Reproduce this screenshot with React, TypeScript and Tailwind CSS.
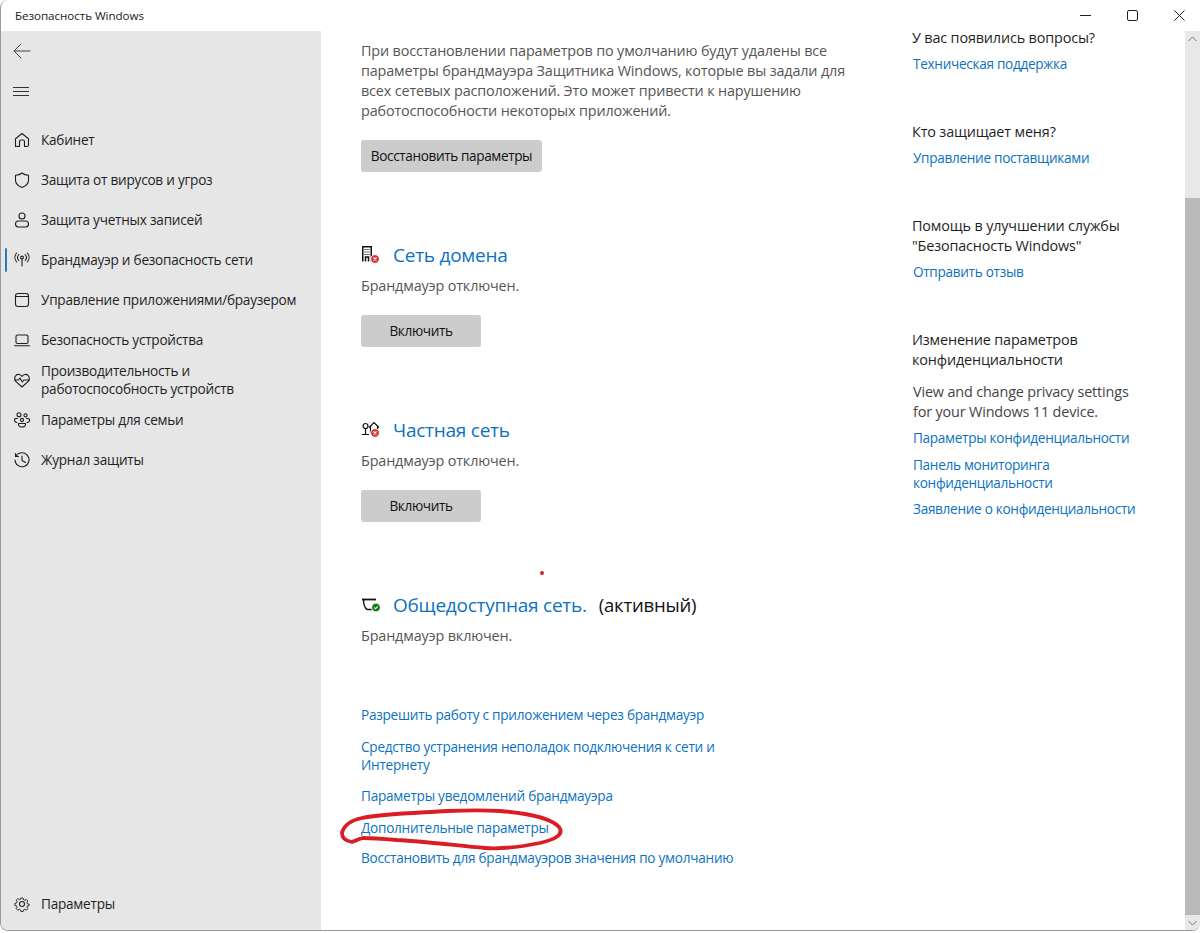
import React from "react";

const S = { fill: "none", stroke: "#1f1f1f", strokeWidth: 1.1, strokeLinecap: "round" as const, strokeLinejoin: "round" as const };
const Ico = ({ children }: { children: React.ReactNode }) => (
  <svg width="16" height="16" viewBox="0 0 16 16" {...S} className="shrink-0">{children}</svg>
);

const nav: { label: React.ReactNode; icon: React.ReactNode; active?: boolean }[] = [
  { label: "Кабинет", icon: <Ico><path d="M1.500 14.500V6.800L8 1.500l6.500 5.300v6.200a1.500 1.500 0 0 1-1.500 1.500h-2.500V9.500A1.500 1.500 0 0 0 9 8H7a1.500 1.500 0 0 0-1.500 1.500v5H3a1.500 1.500 0 0 1-1.500-1.500z" /></Ico> },
  { label: "Защита от вирусов и угроз", icon: <Ico><path d="M8 1C6 2.800 4 3.300 1.500 3.300v5C1.500 11.800 4 14 8 15.500c4-1.500 6.500-3.700 6.500-7.200v-5C12 3.300 10 2.800 8 1z" /></Ico> },
  { label: "Защита учетных записей", icon: <Ico><circle cx="8" cy="4" r="3" /><rect x="1.500" y="9" width="13" height="6" rx="3" /></Ico> },
  { label: "Брандмауэр и безопасность сети", active: true, icon: <Ico><circle cx="8" cy="5.500" r="1.400" /><path d="M8 7v7M4.800 2.500c-1.500 1.700-1.500 4.300 0 6M11.200 2.500c1.500 1.700 1.500 4.300 0 6M2.700 1c-2.300 2.600-2.300 6.400 0 9M13.300 1c2.300 2.600 2.300 6.400 0 9" /></Ico> },
  { label: "Управление приложениями/браузером", icon: <Ico><rect x="1.500" y="1.500" width="13" height="13" rx="2.500" /><path d="M1.500 4.500h13" /></Ico> },
  { label: "Безопасность устройства", icon: <Ico><rect x="2" y="3" width="12" height="8.500" rx="1.500" /><path d="M.5 13.800h15" /></Ico> },
  { label: <>Производительность и<br />работоспособность устройств</>, icon: <Ico><path d="M2.300 9.800C.2 7.800.2 4.800 2 3.300c1.900-1.500 4.500-1 6 1 1.500-2 4.100-2.500 6-1 1.800 1.500 1.800 4.500-.3 6.500L8 15z" /><path d="M.6 8h3.900l1.500-2 2.300 4 1.500-2h5.600" /></Ico> },
  { label: "Параметры для семьи", icon: <Ico><circle cx="5" cy="2.800" r="2" /><circle cx="11.500" cy="3.300" r="1.600" /><circle cx="8" cy="8" r="1.600" /><path d="M3.500 6.500H2A1.500 1.500 0 0 0 .5 8c0 1.600 1 2.500 2.500 2.500M12.500 6.500H14A1.500 1.500 0 0 1 15.500 8c0 1.600-1 2.500-2.500 2.500" /><path d="M4.500 11.500h7v.7c0 1.800-1.500 2.800-3.500 2.800s-3.500-1-3.500-2.800z" /></Ico> },
  { label: "Журнал защиты", icon: <Ico><path d="M1.800 4.500A7 7 0 1 1 1 8M1.500 1.500v3h3M8 4v4.500l3.500 2" /></Ico> },
];

const L = ({ children, className = "" }: { children: React.ReactNode; className?: string }) => (
  <a className={`block text-[#0b72c0] ${className}`}>{children}</a>
);

const Btn = ({ children, w }: { children: React.ReactNode; w: string }) => (
  <div className={`h-8 ${w} rounded-[3px] bg-[#cccccc] text-[#111] text-[13.600px] tracking-[-0.38px] flex items-center justify-center`}>{children}</div>
);

const Net = ({ icon, title, status, extra }: { icon: React.ReactNode; title: string; status: string; extra?: string }) => (
  <div>
    <div className="flex items-center h-7">
      <div className="w-8 shrink-0">{icon}</div>
      <span className="text-[#0b72c0] text-[19px] tracking-[-0.25px]">{title}</span>
      {extra && <span className="ml-[12px] text-[#111] text-[18.500px] tracking-[-0.2px]">{extra}</span>}
    </div>
    <div className="mt-[7px] text-[#555] text-[14.400px]">{status}</div>
  </div>
);

const Bad = ({ cx, cy }: { cx: number; cy: number }) => (
  <g transform={`translate(${cx} ${cy})`}>
    <circle r="4.400" fill="#d13438" stroke="#fff" strokeWidth="1" />
    <path d="M-1.500-1.500l3 3M1.500-1.500l-3 3" stroke="#fff" strokeWidth="1.100" />
  </g>
);

export default function App() {
  return (
    <div className="relative w-[1200px] h-[933px] bg-white overflow-hidden text-[13.600px] leading-5 font-['Open_Sans','Liberation_Sans',sans-serif] tracking-[-0.15px]">
      <div className="h-[931px] rounded-lg border-l border-b border-[#9a9a9a] flex flex-col overflow-hidden bg-white">
        <div className="h-[31px] shrink-0 flex items-center justify-between">
          <span className="ml-[14px] text-[11.600px] text-[#1a1a1a] tracking-[-0.05px]">Безопасность Windows</span>
          <div className="flex items-center mr-[15px] gap-[36px] mt-[-1px]">
            <svg width="11" height="11" viewBox="0 0 11 11" fill="none" stroke="#222" strokeWidth="1"><path d="M0 5.500h11" /></svg>
            <svg width="11" height="11" viewBox="0 0 11 11" fill="none" stroke="#222" strokeWidth="1"><rect x=".5" y=".5" width="10" height="10" rx="1.500" /></svg>
            <svg width="11" height="11" viewBox="0 0 11 11" fill="none" stroke="#222" strokeWidth="1"><path d="M.5.500l10 10M10.500.500l-10 10" /></svg>
          </div>
        </div>
        <div className="flex flex-1 min-h-0">
          <aside className="w-[320px] shrink-0 bg-[#e6e6e6] flex flex-col text-[#1f1f1f] tracking-[-0.24px]">
            <div className="h-10 flex items-center pl-[12px]">
              <svg width="18" height="16" viewBox="0 0 18 16" fill="none" stroke="#444" strokeWidth="1" strokeLinecap="round" strokeLinejoin="round"><path d="M1 8h16M8 1L1 8l7 7" /></svg>
            </div>
            <div className="h-10 flex items-center pl-[12px] pt-[1px]">
              <svg width="16" height="10" viewBox="0 0 16 10" fill="none" stroke="#333" strokeWidth="1"><path d="M0 .5h16M0 4.500h16M0 8.500h16" /></svg>
            </div>
            <div className="mt-[9px] flex flex-col">
              {nav.map((n, i) => (
                <div key={i} className="relative h-10 flex items-center pl-[13px] gap-[11px]">
                  {n.active && <div className="absolute left-[4px] top-[8px] w-[2px] h-[24px] rounded-sm bg-[#2a7cb8]" />}
                  {n.icon}
                  <span className="leading-[18px] whitespace-nowrap">{n.label}</span>
                </div>
              ))}
            </div>
            <div className="mt-auto mb-[6px] h-10 flex items-center pl-[13px] gap-[11px]">
              <Ico><circle cx="8" cy="8" r="2.500" /><path d="M6.700 1h2.600l.4 2 1.600.7 1.800-1.100 1.800 1.800-1.100 1.800.7 1.600 2 .4v1.600l-2 .4-.7 1.600 1.100 1.800-1.800 1.800-1.800-1.100-1.600.7-.4 2H6.700l-.4-2-1.600-.7-1.800 1.100-1.800-1.800 1.100-1.800-.7-1.600-2-.4V7.200l2-.4.7-1.600-1.100-1.800 1.800-1.800 1.800 1.100 1.600-.7z" transform="translate(1.300 1.300) scale(.84)" /></Ico>
              <span>Параметры</span>
            </div>
          </aside>

          <main className="w-[591px] shrink-0 pl-[40px] pt-[10px] text-[#555]">
            <p className="whitespace-nowrap text-[14.400px]">При восстановлении параметров по умолчанию будут удалены все<br />параметры брандмауэра Защитника Windows, которые вы задали для<br />всех сетевых расположений. Это может привести к нарушению<br />работоспособности некоторых приложений.</p>
            <div className="mt-[19px]"><Btn w="w-[181px]">Восстановить параметры</Btn></div>
            <div className="mt-[69px]">
              <Net title="Сеть домена" status="Брандмауэр отключен." icon={
                <svg width="24" height="20" viewBox="0 0 24 20" fill="none" stroke="#111" strokeWidth="1.500"><path d="M1.750 16.500V1.750h8.500V16.500M4.500 16.500v-4.500h3v4.500" /><path d="M3.500 4.500h5M3.500 7h5M3.500 9.500h5" strokeWidth="1" strokeDasharray="1.200 .8" /><Bad cx={14} cy={14} /></svg>
              } />
            </div>
            <div className="mt-[19px]"><Btn w="w-[120px]">Включить</Btn></div>
            <div className="mt-[69px]">
              <Net title="Частная сеть" status="Брандмауэр отключен." icon={
                <svg width="24" height="20" viewBox="0 0 24 20" fill="none" stroke="#111" strokeWidth="1.200"><circle cx="4.500" cy="6" r="2.500" /><path d="M4.500 8.500V14M1 14.500h7M8 7.500l5-5 5 5M9.500 6.500V14M16.500 6.500V10" /><Bad cx={14} cy={13} /></svg>
              } />
            </div>
            <div className="mt-[19px]"><Btn w="w-[120px]">Включить</Btn></div>
            <div className="mt-[69px]">
              <Net title="Общедоступная сеть." extra="(активный)" status="Брандмауэр включен." icon={
                <svg width="24" height="20" viewBox="0 0 24 20" fill="none" stroke="#111" strokeWidth="1.400"><path d="M1 4.500h14" strokeWidth="1.800" /><path d="M2.500 5c0 2 .5 5 1.500 7 .5 1.500 1.500 2.500 3 2.500h4" /><circle cx="15" cy="12.500" r="4.400" fill="#107c10" stroke="#fff" strokeWidth="1" /><path d="M13.200 12.500l1.300 1.300 2.300-2.500" stroke="#fff" strokeWidth="1.100" /></svg>
              } />
            </div>
            <div className="mt-[60px] flex flex-col whitespace-nowrap leading-[18px] tracking-[-0.25px]">
              <L>Разрешить работу с приложением через брандмауэр</L>
              <L className="mt-[14px]">Средство устранения неполадок подключения к сети и<br />Интернету</L>
              <L className="mt-[13px]">Параметры уведомлений брандмауэра</L>
              <L className="mt-[14px]">Дополнительные параметры</L>
              <L className="mt-[12px]">Восстановить для брандмауэров значения по умолчанию</L>
            </div>
          </main>

          <section className="flex-1 min-w-0 text-[#1f1f1f] whitespace-nowrap mt-[-3px]">
            <div className="text-[14.400px]">У вас появились вопросы?</div>
            <L className="mt-[6px] pl-[1px] tracking-[-0.3px]">Техническая поддержка</L>
            <div className="mt-[48px] text-[14.400px]">Кто защищает меня?</div>
            <L className="mt-[6px] pl-[1px] tracking-[-0.3px]">Управление поставщиками</L>
            <div className="mt-[48px] text-[14.400px]">Помощь в улучшении службы<br />"Безопасность Windows"</div>
            <L className="mt-[6px] pl-[1px] tracking-[-0.3px]">Отправить отзыв</L>
            <div className="mt-[48px] text-[14.400px]">Изменение параметров<br />конфиденциальности</div>
            <div className="mt-[12px] pl-[1px] text-[#444] text-[14.400px]">View and change privacy settings<br />for your Windows 11 device.</div>
            <L className="mt-[6px] pl-[1px] tracking-[-0.3px]">Параметры конфиденциальности</L>
            <L className="mt-[8px] pl-[1px] leading-[18px] tracking-[-0.3px]">Панель мониторинга<br />конфиденциальности</L>
            <L className="mt-[7px] pl-[1px] tracking-[-0.3px]">Заявление о конфиденциальности</L>
          </section>

          <div className="w-[15px] shrink-0 bg-[#e8e8e8] flex flex-col">
            <div className="h-[15px] flex items-center justify-center">
              <svg width="9" height="6" viewBox="0 0 9 6" fill="none" stroke="#777"><path d="M.5 5l4-4 4 4" /></svg>
            </div>
            <div className="h-[152px]" />
            <div className="flex-1 bg-[#b9b9b9]" />
            <div className="h-[15px] flex items-center justify-center">
              <svg width="9" height="6" viewBox="0 0 9 6" fill="none" stroke="#777"><path d="M.5 1l4 4 4-4" /></svg>
            </div>
          </div>
        </div>
      </div>

      <div className="absolute left-[540px] top-[571px] w-[4px] h-[4px] rounded-full bg-[#d8232a]" />
      <svg className="absolute left-[335px] top-[805px]" width="235" height="50" viewBox="0 0 235 50" fill="none" stroke="#dc1c24" strokeWidth="3.800" strokeLinecap="round" strokeLinejoin="round">
        <path d="M7 28C9 20 17 15 27 13 C45 9 80 8 112 6 C135 5 150 5 165 6 C190 8 215 12 224 22 C229 29 222 34 205 38 C185 42 165 44 150 43 C125 41 95 37 62 35 C50 34 38 33 28 33 C23 34 20 36 17 37 C11 36 7 33 7 28Z" />
      </svg>
    </div>
  );
}
